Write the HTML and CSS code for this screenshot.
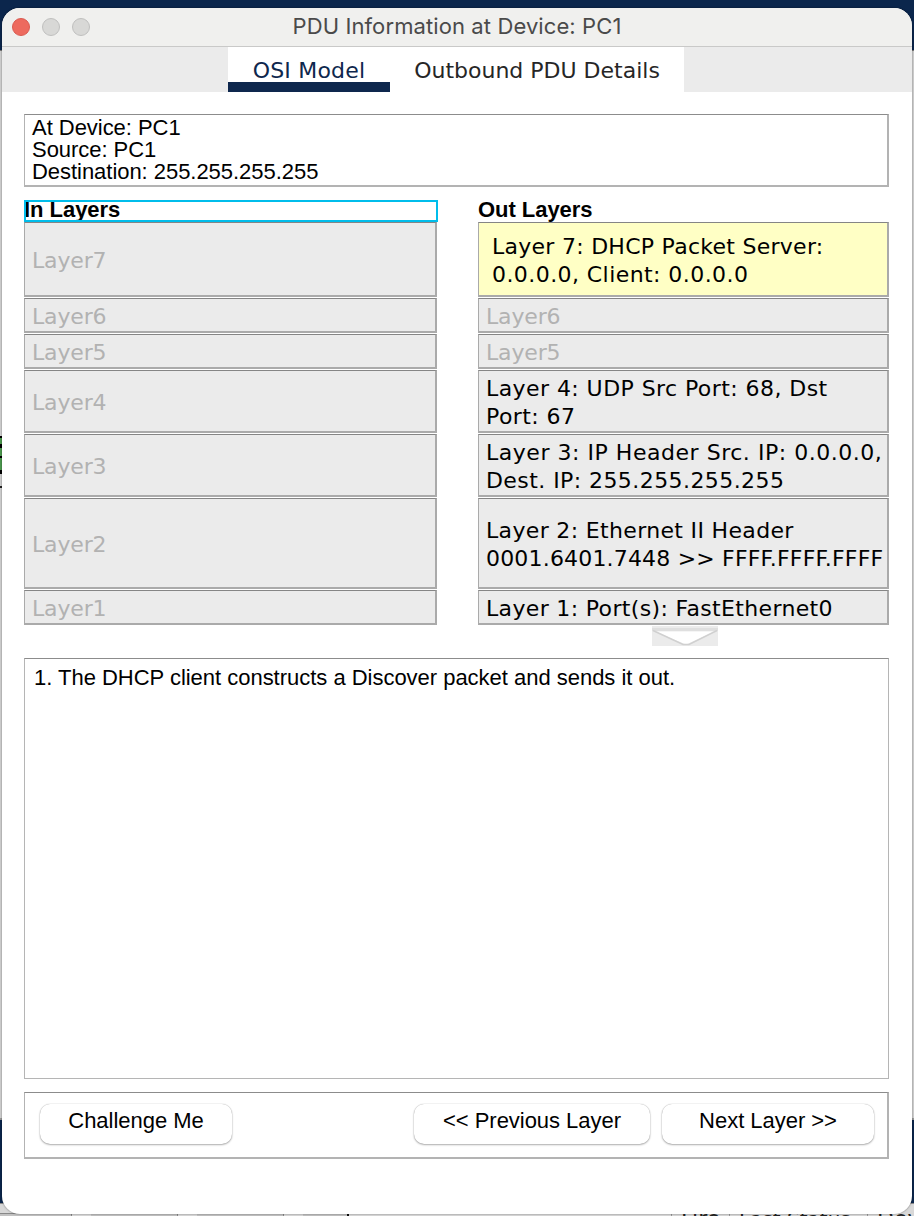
FILE: index.html
```
<!DOCTYPE html>
<html lang="en">
<head>
<meta charset="utf-8">
<title>PDU Information at Device: PC1</title>
<link rel="stylesheet" href="styles.css">
</head>
<body>
<div class="desktop">
  <div class="backdrop">
    <div class="band-top"></div>
    <div class="band-canvas"><i class="chip"></i><i class="chip chip-small"></i><i class="chip chip-tall"></i><i class="tick"></i></div>
    <div class="band-navy"></div>
    <div class="band-status">
      <div class="blocks"><i></i><i></i><i></i><i class="block-short"></i></div>
      <div class="heads"><span class="head-fire">Fire</span><span class="head-status">Last Status</span><span class="head-device">Devi</span></div>
    </div>
  </div>
  <main class="window">
    <header class="titlebar">
      <div class="lights"><i class="light light-close"></i><i class="light"></i><i class="light"></i></div>
      <h1 class="title">PDU Information at Device: PC1</h1>
    </header>
    <nav class="tabs">
      <div class="tab tab-active">OSI Model</div>
      <div class="tab tab-out">Outbound PDU Details</div>
    </nav>
    <section class="content">
      <div class="info">At Device: PC1<br>Source: PC1<br>Destination: 255.255.255.255</div>
      <div class="columns">
        <div class="column column-in">
          <h2 class="heading heading-focus">In Layers</h2>
          <div class="layer h75 off">Layer7</div>
          <div class="layer h35 off">Layer6</div>
          <div class="layer h35 off">Layer5</div>
          <div class="layer h63 off">Layer4</div>
          <div class="layer h63 off">Layer3</div>
          <div class="layer h91 off">Layer2</div>
          <div class="layer h35 off">Layer1</div>
        </div>
        <div class="column column-out">
          <h2 class="heading">Out Layers</h2>
          <div class="layer h75 selected"><span class="snug">Layer 7: DHCP Packet Server:</span><br>0.0.0.0, Client: 0.0.0.0</div>
          <div class="layer h35 off">Layer6</div>
          <div class="layer h35 off">Layer5</div>
          <div class="layer h63">Layer 4: UDP Src Port: 68, Dst<br>Port: 67</div>
          <div class="layer h63"><span class="wide">Layer 3: IP Header Src. IP: 0.0.0.0,</span><br>Dest. IP: 255.255.255.255</div>
          <div class="layer h91"><span class="medium">Layer 2: Ethernet II Header</span><br><span class="mac">0001.6401.7448 &gt;&gt; FFFF.FFFF.FFFF</span></div>
          <div class="layer h35"><span class="medium">Layer 1: Port(s): FastEthernet0</span></div>
          <svg class="arrow" width="66" height="20" viewBox="0 0 66 20"><rect width="66" height="20" fill="#ebebeb"/><rect width="66" height="3" y="2" fill="#dfdfdf"/><path d="M3 5.500H63L34 18.500Z" fill="#fff"/><path d="M1 4.500L31 18.500H37L65 4.500" fill="none" stroke="#d0d0d0" stroke-width="1.600"/></svg>
        </div>
      </div>
      <div class="description">1. The DHCP client constructs a Discover packet and sends it out.</div>
      <footer class="actions">
        <button class="btn btn-challenge">Challenge Me</button>
        <button class="btn btn-prev">&lt;&lt; Previous Layer</button>
        <button class="btn btn-next">Next Layer &gt;&gt;</button>
      </footer>
    </section>
  </main>
</div>
</body>
</html>
```
FILE: styles.css
```
* { box-sizing: border-box; }
body { margin: 0; font-family: "Liberation Sans", Arial, sans-serif; color: #000; }
.desktop { position: relative; width: 914px; height: 1216px; padding: 8px 2px 2px; overflow: hidden; }
.backdrop { position: absolute; inset: 0; display: flex; flex-direction: column; }
.band-top { height: 50px; background: #0b264c; }
.band-canvas { height: 1070px; background: #d0d0d0; border-top: 1px solid #777; border-bottom: 2px solid #999; padding-top: 385px; }
.band-canvas i { display: block; width: 2px; }
.chip { height: 12px; background: #4d9a4f; border-top: 2px solid #000; border-bottom: 4px solid #000; }
.chip-small { height: 10px; border-top: 0; border-bottom-width: 2px; }
.chip-tall { height: 16px; border-top: 0; border-bottom-width: 4px; }
.tick { height: 14px; border-bottom: 2px solid #222; }
.band-navy { height: 83px; background: #0b264c; }
.band-status { height: 13px; display: flex; justify-content: space-between; background: #d8d8d8; border-top: 1px solid #888; overflow: hidden; }
.blocks { display: flex; gap: 19px; align-items: end; }
.blocks i { width: 87px; height: 3px; background: #c2c2c2; border-top: 1px solid #888; border-right: 1px solid #888; }
.blocks i:first-child { width: 72px; }
.blocks .block-short { width: 46px; border-right: 2px solid #111; }
.heads { display: flex; padding-top: 2px; height: 30px; color: #222; font: 22px/26px "DejaVu Sans", sans-serif; white-space: nowrap; }
.heads span { border-left: 1px solid #999; padding-left: 9px; overflow: hidden; }
.head-fire { width: 58px; }
.head-status { width: 138px; font-size: 20px; }
.head-device { width: 47px; }

.window { position: relative; width: 910px; height: 1206px; background: #fff; border-radius: 18px; overflow: hidden; box-shadow: 0 0 2px rgba(0,0,0,.5); }
.titlebar { display: grid; grid-template-columns: 100px 1fr 100px; height: 39px; background: #f0f0ee; border-bottom: 1px solid #c9c9c8; }
.lights { display: flex; gap: 12px; padding: 10px 0 0 10px; }
.light { width: 18px; height: 18px; border-radius: 50%; background: #d8d8d6; border: 1px solid #bfbfbe; }
.light-close { background: #ed6a5e; border-color: #d95a50; }
.title { margin: 0; text-align: center; color: #4a4a4a; font: 400 22px/37px Inter, sans-serif; letter-spacing: .1px; white-space: nowrap; }
.tabs { display: flex; padding-left: 226px; height: 45px; background: #ebebeb; font: 22px/28px "DejaVu Sans", sans-serif; }
.tab { background: #fff; height: 45px; padding-top: 10px; text-align: center; white-space: nowrap; color: #262626; }
.tab-active { width: 162px; border-bottom: 10px solid #0e274d; color: #0e274d; letter-spacing: .2px; }
.tab-out { width: 294px; }
.content { padding: 22px 23px 0 22px; }
.info { height: 73px; padding: 2px 7px; border: solid #b3b3b3; border-width: 1px 2px 2px 1px; border-top-color: #8c8c8c; font-size: 22px; line-height: 22px; letter-spacing: -.04px; }
.columns { display: grid; grid-template-columns: 414px 411px; justify-content: space-between; margin-top: 13px; height: 458px; }
.column { display: flex; flex-direction: column; gap: 1px; }
.heading { margin: 0 0 -1px; height: 22px; font-size: 22px; line-height: 20px; font-weight: 700; letter-spacing: -.04px; }
.heading-focus { outline: 2px solid #00bdeb; outline-offset: -2px; }
.column-in .layer { width: 413px; }
.layer { padding-left: 7px; background: #ebebeb; border: solid #aaa; border-width: 1px 2px 2px 1px; border-top-color: #858585; font: 22px/28px "DejaVu Sans", sans-serif; letter-spacing: .43px; white-space: nowrap; }
.h75 { height: 75px; padding-top: 24px; }
.h35 { height: 35px; padding-top: 4px; }
.h63 { height: 63px; padding-top: 4px; }
.h91 { height: 91px; padding-top: 18px; }
.off { color: #b2b2b2; letter-spacing: -.15px; }
.off.h63 { padding-top: 18px; }
.off.h91 { padding-top: 32px; }
.selected { padding: 10px 0 0 13px; background: #ffffc5; }
.snug { letter-spacing: .27px; }
.medium { letter-spacing: .34px; }
.wide { letter-spacing: .53px; }
.mac { letter-spacing: .18px; }
.arrow { display: block; margin-left: 174px; }
.description { height: 421px; padding: 7px 9px; border: 1px solid #b5b5b5; border-top-color: #8c8c8c; font-size: 22px; line-height: 24px; letter-spacing: -.02px; }
.actions { display: flex; height: 67px; margin-top: 13px; padding: 11px 13px 0 15px; border: solid #b3b3b3; border-width: 1px 2px 2px 1px; border-top-color: #8c8c8c; }
.btn { height: 40px; padding: 0 0 7px; border: 0; border-radius: 10px; background: #fff; color: #000; font: 22px/26px "Liberation Sans", Arial, sans-serif; letter-spacing: -.03px; box-shadow: 0 0 1px rgba(0,0,0,.35), 0 1px 2px rgba(0,0,0,.3); }
.btn-challenge { width: 192px; margin-right: auto; }
.btn-prev { width: 236px; margin-right: 12px; }
.btn-next { width: 212px; }
```
